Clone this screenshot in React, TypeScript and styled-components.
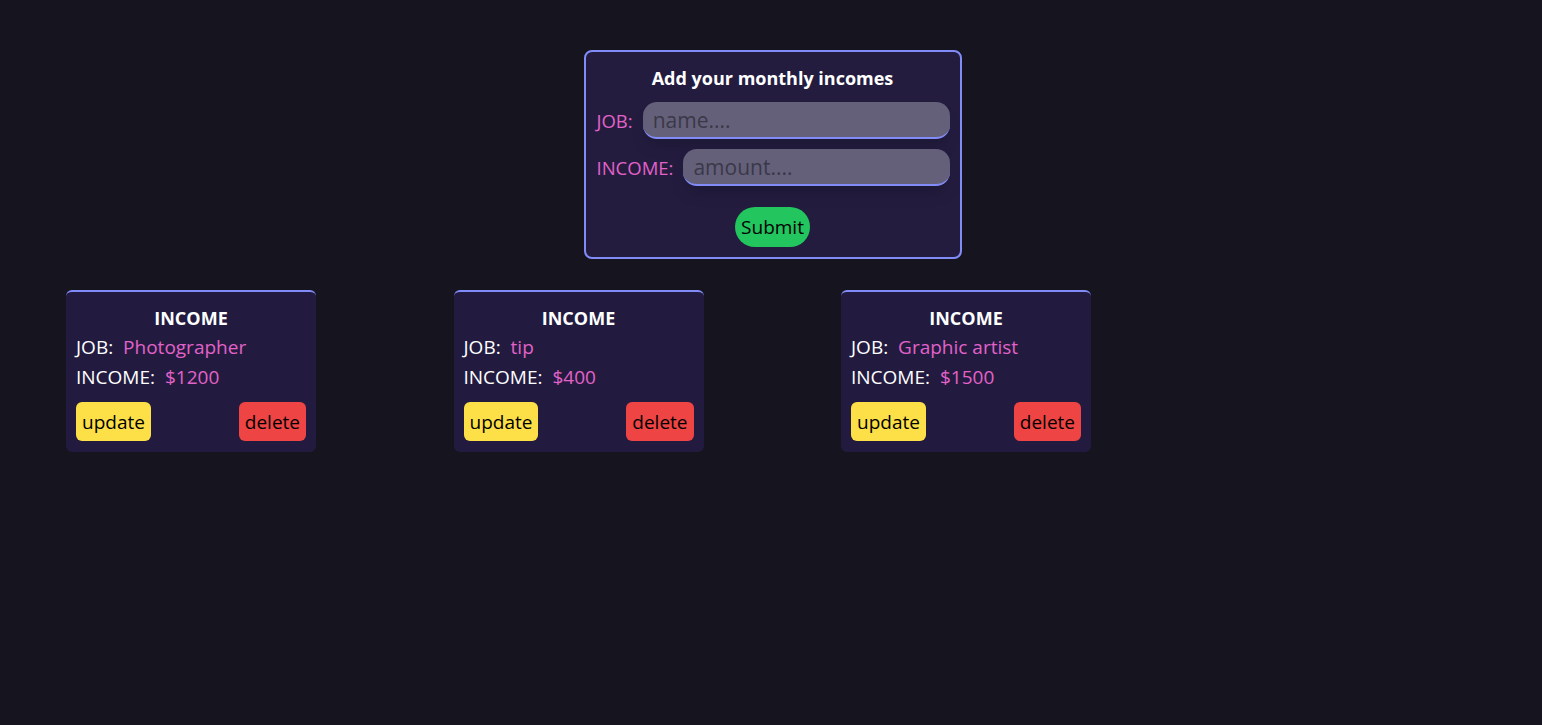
import React from "react";
import styled, { createGlobalStyle } from "styled-components";

const GlobalStyle = createGlobalStyle`
  html, body {
    margin: 0;
    padding: 0;
    background-color: #15141f;
    font-family: "Open Sans", "Noto Sans", "Liberation Sans", sans-serif;
  }
  * {
    box-sizing: border-box;
  }
`;

type Income = {
  id: number;
  job: string;
  amount: number;
};

const incomes: Income[] = [
  { id: 1, job: "Photographer", amount: 1200 },
  { id: 2, job: "tip", amount: 400 },
  { id: 3, job: "Graphic artist", amount: 1500 },
];

const App = () => {
  return (
    <>
      <GlobalStyle />
      <Page>
        <Form onSubmit={(e) => e.preventDefault()}>
          <FormTitle>Add your monthly incomes</FormTitle>
          <Field>
            <FieldLabel>JOB:</FieldLabel>
            <Input placeholder="name...." />
          </Field>
          <Field>
            <FieldLabel>INCOME:</FieldLabel>
            <Input placeholder="amount...." />
          </Field>
          <SubmitButton type="submit">Submit</SubmitButton>
        </Form>

        <CardList>
          {incomes.map((item) => (
            <Card key={item.id}>
              <CardTitle>INCOME</CardTitle>
              <Line>
                JOB: <Value>{item.job}</Value>
              </Line>
              <Line>
                INCOME: <Value>${item.amount}</Value>
              </Line>
              <Actions>
                <ActionButton $variant="update">update</ActionButton>
                <ActionButton $variant="delete">delete</ActionButton>
              </Actions>
            </Card>
          ))}
        </CardList>
      </Page>
    </>
  );
};

export default App;

// ===== styles =====

const Page = styled.div`
  min-height: 725px;
  padding-top: 50px;
  padding-left: 3px;
  display: flex;
  flex-direction: column;
  align-items: center;
`;

const Form = styled.form`
  width: 378px;
  background-color: #231c3f;
  border: 2px solid #818cf8;
  border-radius: 8px;
  padding: 13px 10px 10px;
  display: flex;
  flex-direction: column;
  align-items: center;
`;

const FormTitle = styled.h2`
  margin: 0 0 11px;
  font-size: 18px;
  font-weight: 700;
  line-height: 26px;
  color: #ffffff;
`;

const Field = styled.label`
  width: 100%;
  display: flex;
  align-items: center;
  gap: 10px;
  margin-bottom: 10px;
`;

const FieldLabel = styled.span`
  padding-left: 1px;
  font-size: 18.5px;
  color: #e262c9;
  white-space: nowrap;
`;

const Input = styled.input`
  flex: 1;
  min-width: 0;
  height: 37px;
  padding: 0 10px;
  border: none;
  border-bottom: 2px solid #818cf8;
  border-radius: 14px;
  background-color: #64607a;
  box-shadow: 0 10px 15px -3px rgba(0, 0, 0, 0.15);
  font-family: inherit;
  font-size: 21px;
  color: #1f1d2b;
  outline: none;

  &::placeholder {
    color: #3a3848;
  }
`;

const SubmitButton = styled.button`
  margin-top: 11px;
  height: 40px;
  padding: 0 6px;
  border: none;
  border-radius: 20px;
  background-color: #22c55e;
  font-family: inherit;
  font-size: 19px;
  color: #000000;
  cursor: pointer;
`;

const CardList = styled.div`
  width: 100%;
  margin-top: 31px;
  padding-left: 63px;
  display: flex;
  gap: 137.5px;
`;

const Card = styled.div`
  width: 250px;
  background-color: #221b3f;
  border-top: 2px solid #818cf8;
  border-radius: 6px;
  padding: 12px 10px 11px;
  color: #ffffff;
`;

const CardTitle = styled.div`
  text-align: center;
  font-size: 18px;
  font-weight: 700;
  line-height: 28px;
`;

const Line = styled.div`
  font-size: 19px;
  line-height: 30px;
`;

const Value = styled.span`
  margin-left: 5px;
  color: #e262c9;
`;

const Actions = styled.div`
  display: flex;
  justify-content: space-between;
  margin-top: 10px;
`;

const ActionButton = styled.button<{ $variant: "update" | "delete" }>`
  height: 39px;
  padding: 0 6px;
  border: none;
  border-radius: 6px;
  background-color: ${(p) => (p.$variant === "update" ? "#fde047" : "#ef4444")};
  font-family: inherit;
  font-size: 19px;
  color: #000000;
  cursor: pointer;
`;
